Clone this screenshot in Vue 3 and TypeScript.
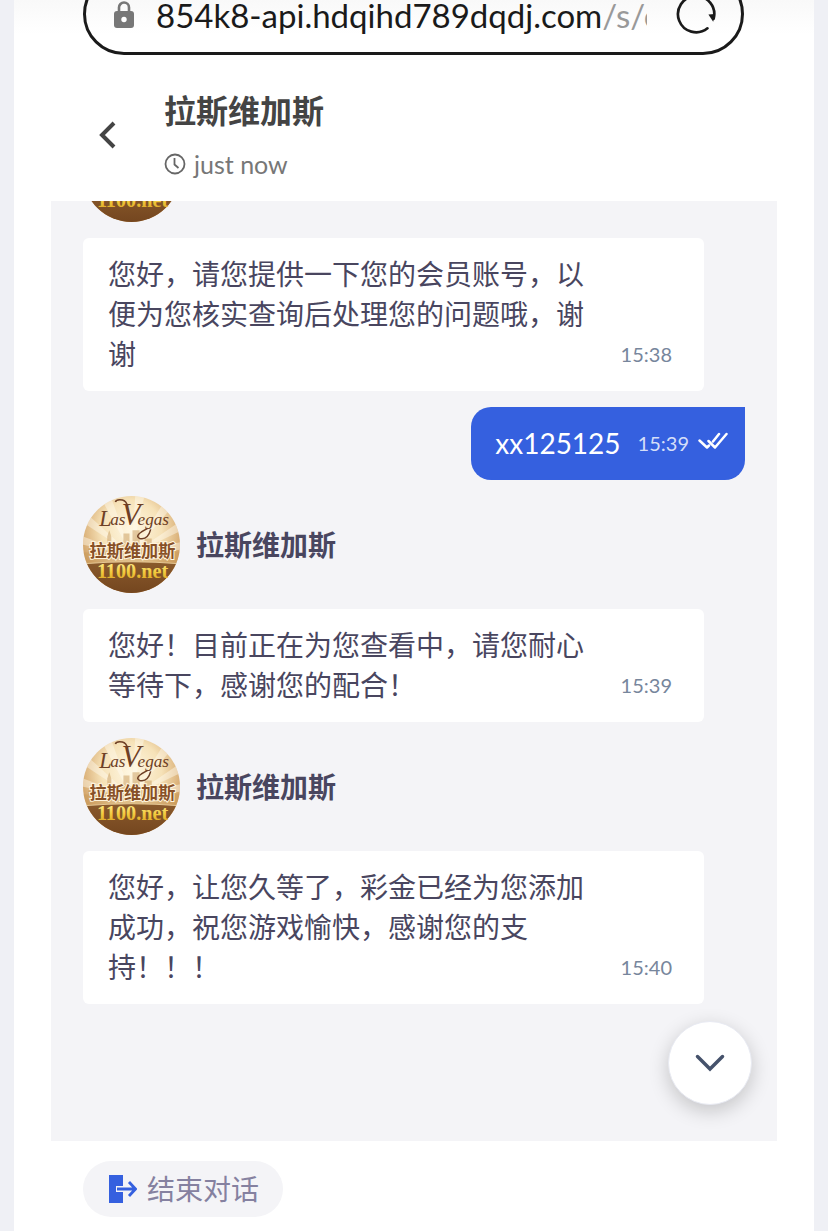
<script setup lang="ts">
interface Message {
  id: number
  from: 'agent' | 'visitor'
  text: string
  time: string
  name?: string
}

const agentName = '拉斯维加斯'

const messages: Message[] = [
  { id: 1, from: 'agent', text: '您好，请您提供一下您的会员账号，以便为您核实查询后处理您的问题哦，谢谢', time: '15:38', name: '' },
  { id: 2, from: 'visitor', text: 'xx125125', time: '15:39' },
  { id: 3, from: 'agent', text: '您好！目前正在为您查看中，请您耐心等待下，感谢您的配合！', time: '15:39', name: agentName },
  { id: 4, from: 'agent', text: '您好，让您久等了，彩金已经为您添加成功，祝您游戏愉快，感谢您的支持！！！', time: '15:40', name: agentName },
]

const rays = [-74, -52, -24, 8, 36, 60, 80]
</script>

<template>
  <div class="page">
    <svg class="defs" width="0" height="0" aria-hidden="true">
      <defs>
        <radialGradient id="sky" cx="50%" cy="35%" r="62%">
          <stop offset="0" stop-color="#fff8e4" />
          <stop offset="0.5" stop-color="#f6e2b8" />
          <stop offset="1" stop-color="#c8904f" />
        </radialGradient>
        <linearGradient id="ground" x1="0" y1="0" x2="0" y2="1">
          <stop offset="0" stop-color="#8a5a2c" />
          <stop offset="1" stop-color="#74461f" />
        </linearGradient>
        <linearGradient id="gold" x1="0" y1="0" x2="0" y2="1">
          <stop offset="0" stop-color="#fff3a0" />
          <stop offset="0.55" stop-color="#f2cb3e" />
          <stop offset="1" stop-color="#d9a021" />
        </linearGradient>
        <clipPath id="disc"><circle cx="48" cy="48" r="48" /></clipPath>
        <symbol id="logo" viewBox="0 0 96 96">
          <g clip-path="url(#disc)">
            <rect width="96" height="96" fill="url(#sky)" />
            <path
              v-for="r in rays"
              :key="r"
              d="M48 58 L42 -20 L54 -20 Z"
              fill="#fffaf0"
              opacity="0.45"
              :transform="`rotate(${r} 48 58)`"
            />
            <path
              d="M0 56h5v-4h5v5h5v-8h4v5h5V40l2-6 2 6v12h7v-6h5v-9h6v11h3V34h7v14h5v-6h7v10h5v-4h6v8h6v-5h6v4h5v18H0z"
              fill="#c79a59"
              opacity="0.5"
            />
            <path d="M0 67Q48 63 96 67V96H0z" fill="url(#ground)" />
            <path d="M0 67Q48 63 96 67" fill="none" stroke="#e5c794" />
          </g>
          <g class="script">
            <text x="16" y="30" font-size="22">L</text>
            <text x="27" y="29" font-size="17">as</text>
            <text x="38" y="29" font-size="31">V</text>
            <text x="54" y="29" font-size="17">egas</text>
          </g>
          <path
            d="M32 6q1-3 7-2 4 1 5 6M67 33q-3 11-11 9-6-3 8-10"
            fill="none"
            stroke="#6e3f25"
            stroke-width="1.5"
          />
          <text class="brand" x="49" y="60" text-anchor="middle">拉斯维加斯</text>
          <text class="site" x="49" y="81" text-anchor="middle">1100.net</text>
        </symbol>
      </defs>
    </svg>

    <div class="address-bar">
      <svg class="lock" viewBox="0 0 22 28" aria-hidden="true">
        <path d="M6 12V7.5a5 5 0 0 1 10 0V12" fill="none" stroke="#777" stroke-width="2.6" />
        <rect x="1" y="11" width="20" height="17" rx="3" fill="#777" />
        <circle cx="11" cy="19.500" r="2.700" fill="#fff" />
      </svg>
      <button class="url" type="button"><span>854k8-api.hdqihd789dqdj.com</span><span class="path">/s/c</span></button>
      <button class="reload" type="button" aria-label="Reload">
        <svg viewBox="0 0 44 44" aria-hidden="true">
          <path d="M34 37A19 19 0 1 1 40.500 27" fill="none" stroke="#1a1a1a" stroke-width="2.800" stroke-linecap="round" />
          <path d="M35 22.500 L42 22 L40 30 Z" fill="#1a1a1a" />
        </svg>
      </button>
    </div>

    <header class="header">
      <button class="back" type="button" aria-label="Back">
        <svg viewBox="0 0 18 28" aria-hidden="true">
          <path d="M16 2 4 14l12 12" fill="none" stroke="#444" stroke-width="4" />
        </svg>
      </button>
      <div class="who">
        <h1>{{ agentName }}</h1>
        <p class="status">
          <svg viewBox="0 0 22 22" aria-hidden="true">
            <circle cx="11" cy="11" r="9.500" fill="none" stroke="#666" stroke-width="1.800" />
            <path d="M10.500 5v6.500l4 3.500" fill="none" stroke="#666" stroke-width="1.800" />
          </svg>
          <span>just now</span>
        </p>
      </div>
    </header>

    <main class="chat">
      <div class="thread">
        <template v-for="m in messages" :key="m.id">
          <div v-if="m.from === 'agent'" class="sender">
            <svg class="avatar" role="img" aria-label="Las Vegas"><use href="#logo" /></svg>
            <strong v-if="m.name">{{ m.name }}</strong>
          </div>
          <article :class="['message', m.from]">
            <p>{{ m.text }}</p>
            <time>{{ m.time }}</time>
            <svg v-if="m.from === 'visitor'" class="ticks" viewBox="0 0 30 18" aria-hidden="true">
              <path d="M1.500 8.500 9 15.500 11 13.500M15 9.500 21 2M10.500 9 17 15.500 28.500 2" fill="none" stroke="#fff" stroke-width="2.500" stroke-linecap="round" stroke-linejoin="round" />
            </svg>
          </article>
        </template>
      </div>
      <button class="to-bottom" type="button" aria-label="Scroll to latest">
        <svg viewBox="0 0 30 18" aria-hidden="true">
          <path d="M2.500 2.500 15 15 27.500 2.500" fill="none" stroke="#45526b" stroke-width="3.500" stroke-linecap="round" />
        </svg>
      </button>
    </main>

    <footer class="footer">
      <button class="end" type="button">
        <svg viewBox="0 0 28 28" aria-hidden="true">
          <rect width="14" height="28" fill="#3560df" />
          <path d="M7 14h18" stroke="#f4f4f7" stroke-width="6" />
          <path d="M8 14h18M20 7l6.500 7-6.500 7" fill="none" stroke="#3560df" stroke-width="2.800" />
        </svg>
        <span>结束对话</span>
      </button>
    </footer>
  </div>
</template>

<style>
body {
  margin: 0;
}
</style>

<style scoped>
.page {
  box-sizing: border-box;
  display: flex;
  flex-direction: column;
  min-height: 100vh;
  overflow: hidden;
  border: solid #eff0f5;
  border-width: 0 14px;
  background: linear-gradient(#f9f9f9, #fff 34px);
  font-family: Lato, "Noto Sans CJK SC", sans-serif;
}

h1,
p {
  margin: 0;
}

svg {
  display: block;
  flex: none;
}

.defs {
  position: absolute;
}

button {
  padding: 0;
  border: 0;
  background: none;
  font: inherit;
  color: inherit;
}

.address-bar {
  box-sizing: border-box;
  display: flex;
  align-items: center;
  height: 82px;
  margin: -27px 70px 0 69px;
  padding: 0 24px 0 27px;
  border: 3px solid #1a1a1a;
  border-radius: 41px;
  background: linear-gradient(#f9f9f9 24px, #fff 58px);
}

.lock {
  width: 22px;
  height: 28px;
}

.url {
  flex: 1;
  min-width: 0;
  margin: 2px 28px 0 21px;
  overflow: hidden;
  white-space: nowrap;
  text-align: left;
  font-size: 33px;
  line-height: 44px;
  color: #1a1a1a;
}

.path {
  color: #999;
}

.reload svg {
  width: 42px;
  height: 42px;
}

.header {
  display: flex;
  align-items: center;
  gap: 48px;
  padding: 32px 69px 19px 84px;
}

.back svg {
  width: 18px;
  height: 28px;
}

.who h1 {
  font-size: 32px;
  line-height: 48px;
  font-weight: 700;
  color: #444;
}

.status {
  display: flex;
  align-items: center;
  gap: 8px;
  margin-top: 11px;
  font-size: 25px;
  line-height: 36px;
  color: #777;
}

.status svg {
  width: 22px;
  height: 22px;
}

.chat {
  position: relative;
  flex: 1;
  margin: 0 37px;
  padding: 0 32px 137px;
  overflow: hidden;
  background: #f4f4f7;
}

.thread {
  display: flex;
  flex-direction: column;
  gap: 16px;
  margin-top: -76px;
}

.sender {
  display: flex;
  align-items: center;
  gap: 16px;
  font-size: 28px;
  line-height: 40px;
  color: #49465f;
}

.sender strong {
  font-weight: 700;
}

.avatar {
  width: 97px;
  height: 97px;
}

.script {
  font-family: "Liberation Serif", serif;
  font-style: italic;
  fill: #6e3f25;
}

.brand {
  font: 700 17px "Noto Sans CJK SC", sans-serif;
  fill: #875027;
  stroke: #fff4dc;
  stroke-width: 2px;
  paint-order: stroke;
}

.site {
  font: 700 20px "Liberation Serif", serif;
  fill: url(#gold);
}

.message {
  display: flex;
  align-items: flex-end;
  font-size: 28px;
  line-height: 40px;
}

.message time {
  font-size: 20px;
}

.agent {
  gap: 24px;
  margin-right: 41px;
  padding: 16px 32px 17px 25px;
  border-radius: 6px;
  background: #fff;
  color: #49465f;
}

.agent p {
  flex: 1;
}

.agent time {
  color: #77869c;
}

.visitor {
  align-items: center;
  align-self: flex-end;
  padding: 16px 17px 17px 24px;
  border-radius: 20px 0 20px 20px;
  background: #3560df;
  color: #fff;
}

.visitor time {
  margin: 0 9px 0 17px;
  color: #d4def8;
}

.ticks {
  width: 30px;
  height: 18px;
  margin-bottom: 4px;
}

.to-bottom {
  position: absolute;
  right: 25px;
  bottom: 36px;
  display: grid;
  place-items: center;
  box-sizing: border-box;
  width: 84px;
  height: 84px;
  border: 1px solid #e8eaf2;
  border-radius: 50%;
  background: #fff;
  box-shadow: 0 6px 20px rgba(0, 0, 0, 0.2);
}

.to-bottom svg {
  width: 30px;
  height: 18px;
}

.footer {
  padding: 20px 69px 14px;
}

.end {
  display: flex;
  align-items: center;
  gap: 10px;
  padding: 8px 24px 8px 26px;
  border-radius: 28px;
  background: #f4f4f7;
  font-size: 28px;
  line-height: 40px;
  color: #8581a0;
}

.end svg {
  width: 28px;
  height: 28px;
}
</style>
